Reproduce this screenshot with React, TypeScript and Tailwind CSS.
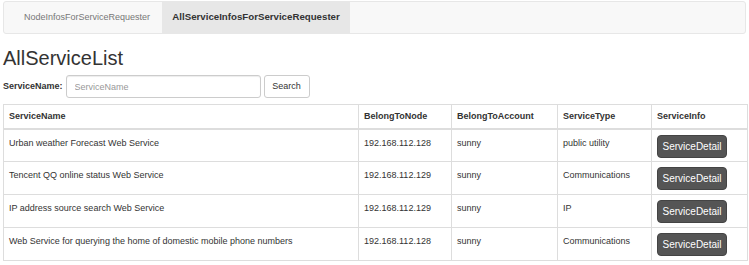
const rows = [
  { name: "Urban weather Forecast Web Service", node: "192.168.112.128", account: "sunny", type: "public utility" },
  { name: "Tencent QQ online status Web Service", node: "192.168.112.129", account: "sunny", type: "Communications" },
  { name: "IP address source search Web Service", node: "192.168.112.129", account: "sunny", type: "IP" },
  { name: "Web Service for querying the home of domestic mobile phone numbers", node: "192.168.112.128", account: "sunny", type: "Communications" },
];

export default function App() {
  return (
    <div className="w-[749px] h-[265px] bg-white px-[3px] pt-px text-[#333] overflow-hidden" style={{ fontFamily: '"Liberation Sans", Arial, sans-serif' }}>
      <nav className="flex h-[33px] rounded-[3px] border border-[#e7e7e7] bg-[#f8f8f8] pl-[8px] text-[9px]">
        <a className="flex items-center px-[12px] text-[#777]">NodeInfosForServiceRequester</a>
        <a className="flex w-[188px] items-center justify-center bg-[#e7e7e7] text-[9.7px] font-bold text-[#333]">AllServiceInfosForServiceRequester</a>
      </nav>

      <h1 className="mt-[13px] text-[20px] leading-[22px]">AllServiceList</h1>

      <div className="mt-[6px] flex items-center">
        <label className="mr-[3px] text-[9px] font-bold">ServiceName:</label>
        <input
          placeholder="ServiceName"
          className="h-[23px] w-[195px] rounded-[3px] border border-[#ccc] px-[8px] text-[9px] outline-none placeholder:text-[#999] shadow-[inset_0_1px_1px_rgba(0,0,0,0.075)]"
        />
        <button className="ml-[3px] h-[23px] w-[46px] rounded-[3px] border border-[#ccc] bg-white text-[9px]">Search</button>
      </div>

      <table className="mt-[6px] w-[744px] table-fixed border-collapse border border-[#ddd] text-[9px]">
        <colgroup>
          <col className="w-[355px]" />
          <col className="w-[93px]" />
          <col className="w-[106px]" />
          <col className="w-[94px]" />
          <col className="w-[96px]" />
        </colgroup>
        <thead>
          <tr className="h-[24px] border-b-2 border-[#ddd] text-left font-bold">
            {["ServiceName", "BelongToNode", "BelongToAccount", "ServiceType", "ServiceInfo"].map((h) => (
              <th key={h} className="border-x border-[#ddd] px-[5px] align-middle">{h}</th>
            ))}
          </tr>
        </thead>
        <tbody>
          {rows.map((r, i) => (
            <tr key={i} className="h-[33px] border-t border-[#ddd] align-top">
              <td className="border-x border-[#ddd] px-[5px] pt-[7px]">{r.name}</td>
              <td className="border-x border-[#ddd] px-[5px] pt-[7px]">{r.node}</td>
              <td className="border-x border-[#ddd] px-[5px] pt-[7px]">{r.account}</td>
              <td className="border-x border-[#ddd] px-[5px] pt-[7px]">{r.type}</td>
              <td className="border-x border-[#ddd] px-[5px] pt-[5px]">
                <button className="h-[23px] w-[70px] rounded-[4px] border border-[#444] bg-[#555] text-[10px] text-white">ServiceDetail</button>
              </td>
            </tr>
          ))}
        </tbody>
      </table>
    </div>
  );
}
